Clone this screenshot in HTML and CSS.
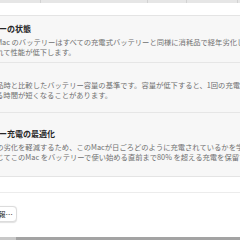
FILE: index.html
```html
<!DOCTYPE html>
<html lang="ja">
<head>
<meta charset="utf-8">
<link rel="stylesheet" href="styles.css">
</head>
<body>
<div class="window">
  <div class="header-strip">
    <span class="col c1"></span><span class="col c2"></span><span class="col c3"></span><span class="col c4"></span>
  </div>
  <div class="content">
    <div class="group">
      <div class="row r1">
        <div class="title">バッテリーの状態</div>
        <p class="desc">お使いのMac のバッテリーはすべての充電式バッテリーと同様に消耗品で経年劣化し、<br>劣化につれて性能が低下します。</p>
      </div>
      <div class="row r2">
        <div class="title">最大容量</div>
        <p class="desc">これは新品時と比較したバッテリー容量の基準です。容量が低下すると、1回の充電で<br>使用できる時間が短くなることがあります。</p>
      </div>
      <div class="row r3">
        <div class="title">バッテリー充電の最適化</div>
        <p class="desc">電池寿命の劣化を軽減するため、このMacが日ごろどのように充電されているかを学習し、<br>必要に応じてこのMac をバッテリーで使い始める直前まで80% を超える充電を保留する場合が<br>あります。</p>
      </div>
    </div>
    <div class="spacer-line"></div>
    <div class="actions">
      <button class="btn">詳しい情報…</button>
      <button class="btn">完了</button>
    </div>
  </div>
  <div class="bottom-strip"><span class="light"></span></div>
</div>
</body>
</html>
```

FILE: styles.css
```css
html, body {
  margin: 0;
  padding: 0;
  width: 240px;
  height: 240px;
  overflow: hidden;
  background: #ffffff;
}
body {
  font-family: "Noto Sans CJK JP", "Noto Sans", sans-serif;
}
.window {
  width: 240px;
  height: 240px;
  display: flex;
  flex-direction: column;
  overflow: hidden;
}
.header-strip {
  height: 3px;
  display: flex;
  background: #e6e6e6;
  flex: none;
}
.col { height: 3px; border-right: 1px solid #d2d2d2; }
.c1 { width: 40px; }
.c2 { width: 106px; }
.c3 { width: 38px; }
.c4 { width: 50px; }
.content {
  flex: 1;
  margin-top: 12px;
  margin-left: -47px;
  width: 420px;
}
.group {
  background: #f7f7f7;
  border-top: 1px solid #e4e4e4;
  border-bottom: 1px solid #e4e4e4;
}
.row {
  padding: 0 0 0 14px;
  border-top: 1px solid #e6e6e6;
  box-sizing: border-box;
}
.row:first-child { border-top: none; }
.r1 { height: 46px; padding-top: 7px; }
.r2 { height: 50px; padding-top: 3px; }
.r3 { height: 64px; padding-top: 15px; }
.title {
  font-size: 8px;
  line-height: 11px;
  font-weight: 700;
  color: #262626;
  white-space: nowrap;
}
.desc {
  margin: 3px 0 0 0;
  font-size: 7.3px;
  line-height: 10px;
  color: #6f6f6f;
  white-space: nowrap;
}
.spacer-line {
  height: 15px;
  border-bottom: 1px solid #ececec;
}
.actions {
  padding: 13px 0 0 12px;
  display: flex;
  gap: 226px;
  align-items: flex-start;
}
.btn {
  font-family: "Noto Sans CJK JP", sans-serif;
  font-size: 7.3px;
  line-height: 10px;
  color: #262626;
  background: #ffffff;
  border: 1px solid #dcdcdc;
  border-radius: 4px;
  padding: 2px 3px;
  margin: 0;
  box-shadow: 0 0.5px 1px rgba(0,0,0,0.12);
}
.bottom-strip {
  height: 3px;
  background: #a3a3a3;
  flex: none;
  display: flex;
}
.light { width: 16px; background: #c8c8c8; }
```
